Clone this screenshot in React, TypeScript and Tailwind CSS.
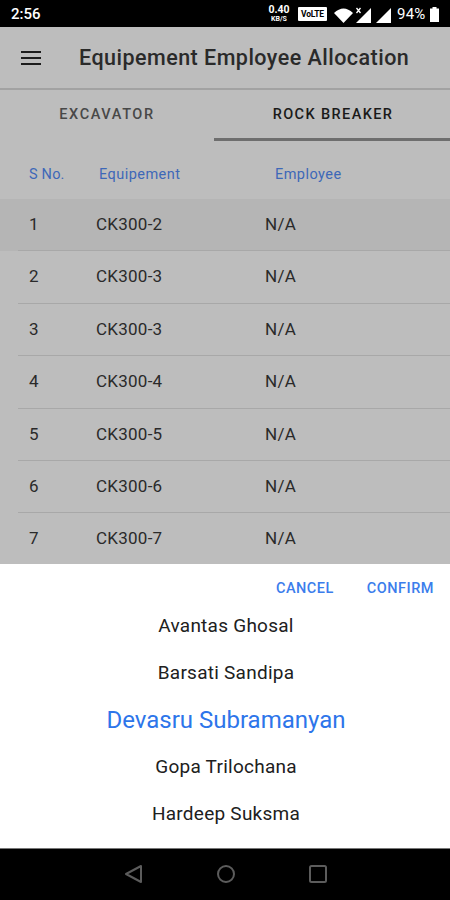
import { clsx } from "clsx";

type Allocation = {
  id: number;
  equipment: string;
  employee: string;
};

const allocations: Allocation[] = [
  { id: 1, equipment: "CK300-2", employee: "N/A" },
  { id: 2, equipment: "CK300-3", employee: "N/A" },
  { id: 3, equipment: "CK300-3", employee: "N/A" },
  { id: 4, equipment: "CK300-4", employee: "N/A" },
  { id: 5, equipment: "CK300-5", employee: "N/A" },
  { id: 6, equipment: "CK300-6", employee: "N/A" },
  { id: 7, equipment: "CK300-7", employee: "N/A" },
];

const employees = [
  "Avantas Ghosal",
  "Barsati Sandipa",
  "Devasru Subramanyan",
  "Gopa Trilochana",
  "Hardeep Suksma",
];

const selectedRow = 1;
const selectedEmployee = "Devasru Subramanyan";

function StatusBar() {
  return (
    <div className="flex h-[27px] shrink-0 items-center bg-black pl-[11px] pr-[11px] text-white">
      <span className="pt-px text-[15px] font-medium leading-none">2:56</span>
      <div className="ml-auto flex items-center">
        <div className="flex w-[22px] flex-col items-center font-bold">
          <span className="text-[10.5px] leading-[11px]">0.40</span>
          <span className="text-[7px] leading-[8px]">KB/S</span>
        </div>
        <span className="ml-[8px] mt-px flex h-[14px] w-[29px] items-center justify-center rounded-[1px] bg-white text-[8.5px] font-bold leading-none tracking-[-0.2px] text-black">
          VoLTE
        </span>
        <svg
          aria-hidden="true"
          className="ml-[7px] mt-[2px] h-[18px] w-[59px]"
          fill="currentColor"
          viewBox="0 0 59 18"
        >
          <path d="M0 7Q9.500-2 19 7L9.500 17Z" />
          <path d="M37 2v15H22Z" />
          <path d="M57 2v15H42Z" />
          <path
            d="m22.500 2 4 5m0-5-4 5"
            fill="none"
            stroke="currentColor"
            strokeWidth="1.300"
          />
        </svg>
        <span className="ml-[4px] w-[30px] pt-px text-[15px] leading-none tracking-[0.2px]">
          94%
        </span>
        <svg
          aria-hidden="true"
          className="ml-[3px] mt-px h-[15px] w-[9px]"
          fill="currentColor"
          viewBox="0 0 9 15"
        >
          <path d="M2.500 0h4v1.500H9V15H0V1.500h2.500Z" />
        </svg>
      </div>
    </div>
  );
}

function Header() {
  return (
    <header className="flex h-[63px] shrink-0 items-center border-b-2 border-[#a2a2a2] pl-[21px]">
      <button aria-label="Menu" className="text-[#1c1c1c]" type="button">
        <svg
          className="h-[14px] w-[20px]"
          stroke="currentColor"
          strokeWidth="2"
          viewBox="0 0 20 14"
        >
          <path d="M0 1h20M0 7h20M0 13h20" />
        </svg>
      </button>
      <h1 className="ml-[38px] whitespace-nowrap text-[21.5px] font-medium leading-none tracking-[0.47px] text-[#2a2a2a]">
        Equipement Employee Allocation
      </h1>
    </header>
  );
}

function Tabs() {
  return (
    <div className="flex h-[51px] shrink-0 text-[14.5px] font-medium" role="tablist">
      <button
        aria-selected={false}
        className="w-[214px] pb-[2px] tracking-[1.6px] text-[#484848]"
        role="tab"
        type="button"
      >
        EXCAVATOR
      </button>
      <button
        aria-selected={true}
        className="flex-1 border-b-[3px] border-[#6e6e6e] pl-[2px] pt-[2px] tracking-[1.4px] text-[#1a1a1a]"
        role="tab"
        type="button"
      >
        ROCK BREAKER
      </button>
    </div>
  );
}

function AllocationList() {
  return (
    <div className="min-h-0 flex-1 overflow-hidden">
      <div className="flex h-[58px] items-center pb-px pt-[10px] text-[14.5px] text-[#3d68b8]">
        <span className="w-[99px] pl-[29px] tracking-[0.2px]">S No.</span>
        <span className="w-[176px] tracking-[0.45px]">Equipement</span>
        <span className="tracking-[0.45px]">Employee</span>
      </div>
      {allocations.map((item) => (
        <div
          className={clsx("h-[52.4px] pl-[18px]", item.id === selectedRow && "bg-[#b5b5b5]")}
          key={item.id}
        >
          <div className="flex h-full items-center border-b border-[#a8a8a8] pl-[11px] text-[17px] text-[#2a2a2a]">
            <span className="w-[67px]">{item.id}</span>
            <span className="w-[169px] tracking-[0.25px]">{item.equipment}</span>
            <span className="tracking-[0.3px]">{item.employee}</span>
          </div>
        </div>
      ))}
    </div>
  );
}

function EmployeePicker() {
  return (
    <section className="h-[284px] shrink-0 bg-white">
      <div className="flex h-[50px] items-center justify-end gap-[33px] pr-[16px] text-[14.5px] font-medium tracking-[0.5px] text-[#3b7dec]">
        <button type="button">CANCEL</button>
        <button type="button">CONFIRM</button>
      </div>
      <ul className="-mt-[11px] pl-[2px]">
        {employees.map((name) => (
          <li
            className={clsx(
              "flex h-[47px] items-center justify-center whitespace-nowrap",
              name === selectedEmployee
                ? "pb-px text-[24px] text-[#2d75ea]"
                : "text-[19px] tracking-[0.25px] text-[#202020]",
            )}
            key={name}
          >
            {name}
          </li>
        ))}
      </ul>
    </section>
  );
}

function NavigationBar() {
  return (
    <nav className="flex h-[52px] shrink-0 items-center justify-center border-t border-[#777] bg-black pb-px pl-[2px] text-[#5c5c5c]">
      <svg
        aria-hidden="true"
        className="h-[20px] w-[204px]"
        fill="none"
        stroke="currentColor"
        strokeLinejoin="round"
        strokeWidth="2"
        viewBox="0 0 204 20"
      >
        <path d="M17 2v16L2 10Z" />
        <circle cx="102" cy="10" r="8" />
        <rect height="16" rx="1.500" width="16" x="186" y="2" />
      </svg>
    </nav>
  );
}

export default function App() {
  return (
    <div className="flex h-[900px] w-[450px] flex-col overflow-hidden bg-[#bdbdbd] font-['Roboto',sans-serif]">
      <StatusBar />
      <Header />
      <Tabs />
      <AllocationList />
      <EmployeePicker />
      <NavigationBar />
    </div>
  );
}
